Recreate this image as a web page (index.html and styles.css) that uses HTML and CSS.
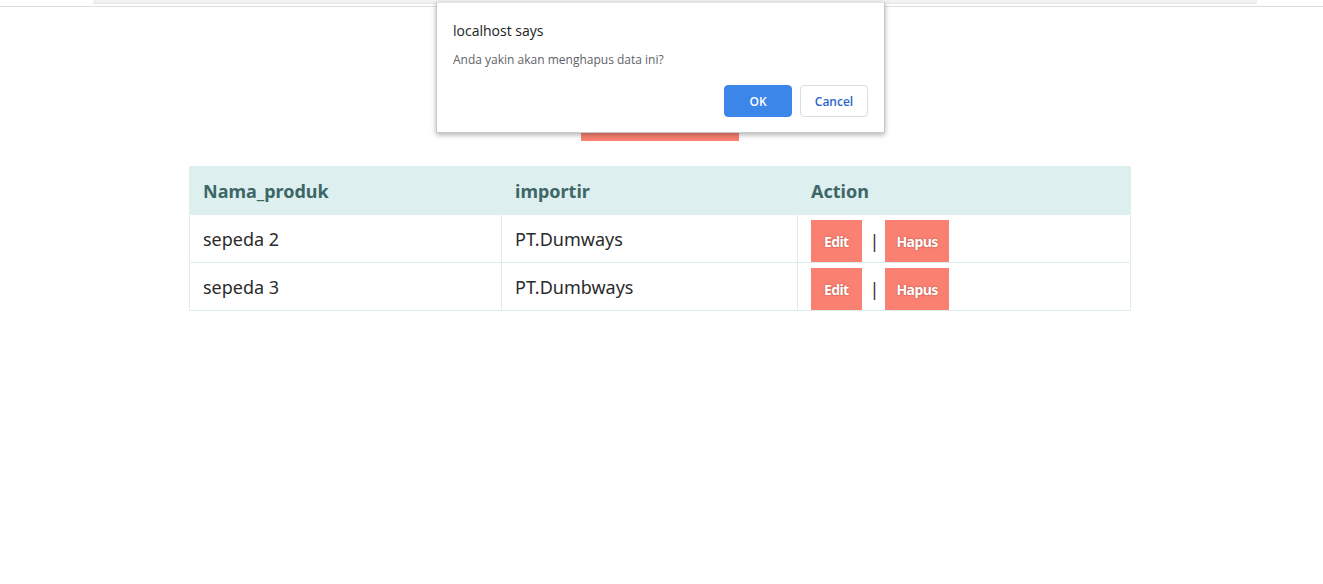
FILE: index.html
```html
<!DOCTYPE html>
<html>
<head>
<meta charset="utf-8">
<link rel="stylesheet" href="styles.css">
</head>
<body>
<div class="topbar"><div class="topbar-inner"></div></div>
<main class="page">
  <div class="add-row"><a class="btn-add">Tambah Data</a></div>
  <table class="data">
    <thead>
      <tr><th class="c1">Nama_produk</th><th class="c2">importir</th><th>Action</th></tr>
    </thead>
    <tbody>
      <tr><td>sepeda 2</td><td>PT.Dumways</td><td class="act"><a class="btn">Edit</a><span class="sep">|</span><a class="btn">Hapus</a></td></tr>
      <tr><td>sepeda 3</td><td>PT.Dumbways</td><td class="act"><a class="btn">Edit</a><span class="sep">|</span><a class="btn">Hapus</a></td></tr>
    </tbody>
  </table>
</main>
<div class="dialog">
  <div class="dlg-title">localhost says</div>
  <div class="dlg-msg">Anda yakin akan menghapus data ini?</div>
  <div class="dlg-actions">
    <button class="dlg-ok">OK</button>
    <button class="dlg-cancel">Cancel</button>
  </div>
</div>
</body>
</html>
```
FILE: styles.css
```css
html, body { margin: 0; padding: 0; background: #fff; }
body { font-family: "Noto Sans", "Open Sans", sans-serif; }

.topbar {
  height: 6px;
  border-bottom: 1px solid #dcdcdc;
  display: flex;
  justify-content: center;
}
.topbar-inner {
  width: 1164px;
  height: 3px;
  margin-left: 26px;
  background: #f1f1f1;
  border-bottom: 1px solid #e6e6e6;
}

.page {
  width: 942px;
  margin-left: 189px;
  padding-top: 94px;
}
.add-row { display: flex; justify-content: center; }
.btn-add {
  width: 158px;
  height: 40px;
  background: #fa8072;
  color: #fff;
  display: flex; align-items: center; justify-content: center;
  font-weight: bold;
  font-size: 14px;
}

.data {
  width: 100%;
  border-collapse: collapse;
  margin-top: 25px;
  border: 1px solid #deeeee;
  font-size: 18px;
}
.data th, .data td {
  height: 48px;
  padding: 0 13px;
  text-align: left;
  border: 1px solid #deeeee;
  box-sizing: border-box;
}
.data th {
  background: #ddefef;
  color: #3d6767;
  font-weight: bold;
  border-color: #ddefef;
}
.data td { color: #2b2b2b; }
.c1 { width: 312px; }
.c2 { width: 296px; }
.data td.act { padding-top: 5px; padding-bottom: 0; vertical-align: top; }
.act { white-space: nowrap; }
.btn {
  display: inline-flex;
  align-items: center;
  justify-content: center;
  height: 42px;
  padding: 0 11px;
  background: #fa8072;
  color: #fff;
  font-size: 14px;
  font-weight: bold;
  letter-spacing: -0.6px;
  text-shadow: 0 0 2px rgba(120,40,30,0.6);
  vertical-align: top;
}
.btn:first-child { padding: 0 13px; }
.sep {
  display: inline-flex;
  align-items: center;
  height: 42px;
  padding: 0 6px 0 8px;
  color: #333;
  font-size: 18px;
  vertical-align: top;
}

.dialog {
  position: absolute;
  left: 436px;
  top: 2px;
  width: 449px;
  height: 131px;
  box-sizing: border-box;
  background: #fff;
  border: 1px solid #c9c9c9;
  border-top-color: #e2e2e2;
  box-shadow: 0 2px 5px rgba(0,0,0,0.3);
  padding: 18px 16px 0 16px;
  font-family: "Open Sans", "Noto Sans", sans-serif;
}
.dlg-title { font-size: 14px; color: #202124; line-height: 20px; }
.dlg-msg { font-size: 12px; color: #5f6368; margin-top: 10px; line-height: 18px; }
.dlg-actions {
  display: flex;
  justify-content: flex-end;
  gap: 8px;
  margin-top: 16px;
}
.dlg-actions button {
  height: 32px;
  border-radius: 4px;
  font-family: inherit;
  font-size: 12px;
  font-weight: 600;
  cursor: default;
}
.dlg-ok {
  width: 68px;
  background: #3b86e8;
  color: #fff;
  border: 1px solid #3b86e8;
}
.dlg-cancel {
  width: 68px;
  background: #fff;
  color: #2a66c9;
  border: 1px solid #dadce0;
}
```
